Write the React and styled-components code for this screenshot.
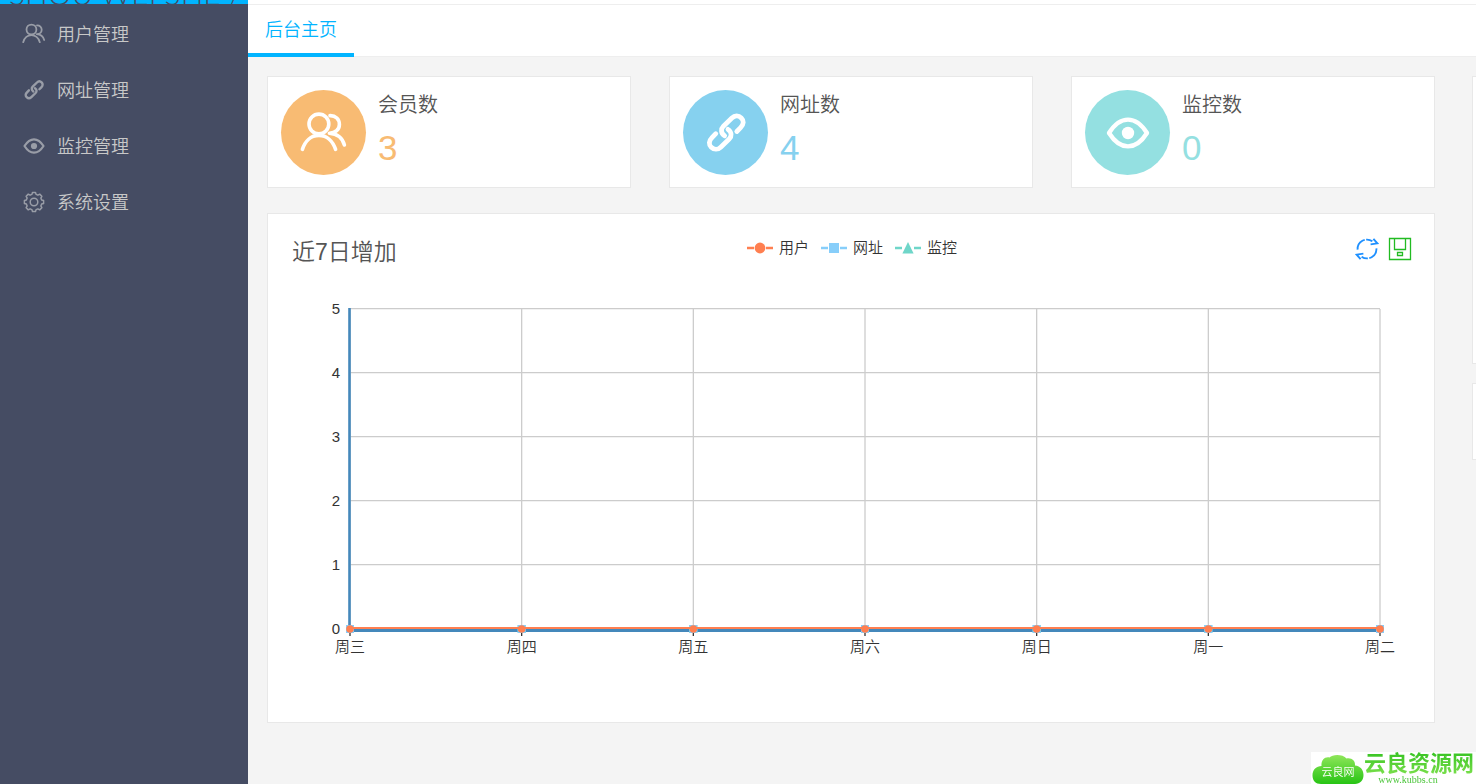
import React, { useState } from 'react';
import styled, { createGlobalStyle } from 'styled-components';

const MENU = [
  { key: 'user', title: '用户管理', icon: 'users' },
  { key: 'site', title: '网址管理', icon: 'link' },
  { key: 'monitor', title: '监控管理', icon: 'eye' },
  { key: 'setting', title: '系统设置', icon: 'gear' },
];

const STATS = [
  { title: '会员数', value: 3, icon: 'users', color: '#f8bb73' },
  { title: '网址数', value: 4, icon: 'link', color: '#86d1ef' },
  { title: '监控数', value: 0, icon: 'eye', color: '#94e0e1' },
];

const DAYS = ['周三', '周四', '周五', '周六', '周日', '周一', '周二'];

const SERIES = [
  { name: '用户', color: '#ff7f50', shape: 'circle', data: [0, 0, 0, 0, 0, 0, 0] },
  { name: '网址', color: '#87cefa', shape: 'rect', data: [0, 0, 0, 0, 0, 0, 0] },
  { name: '监控', color: '#6fd6c9', shape: 'triangle', data: [0, 0, 0, 0, 0, 0, 0] },
];

// outline of a cog with flat teeth
const gearPath = (teeth, inner, outer) => {
  const step = (Math.PI * 2) / teeth;
  const points = [];
  for (let i = 0; i < teeth; i++) {
    [
      [-0.34, inner],
      [-0.2, outer],
      [0.2, outer],
      [0.34, inner],
    ].forEach(([offset, r]) => {
      const a = (i + offset) * step - Math.PI / 2;
      points.push(`${(24 + r * Math.cos(a)).toFixed(2)} ${(24 + r * Math.sin(a)).toFixed(2)}`);
    });
  }
  return `M${points.join('L')}Z`;
};

const LINK_HALF = 'M34.8 22.5L38.6 18.6C42 15.2 42 11.5 39.3 8.9C36.6 6.3 32.6 6.4 29.9 9L21.4 17.2C18.7 19.9 18.7 24.2 22.6 26.8';

function Icon({ name, size }) {
  return (
    <svg
      width={size}
      height={size}
      viewBox="0 0 48 48"
      fill="none"
      stroke="currentColor"
      strokeLinecap="round"
      strokeLinejoin="round"
      aria-hidden="true"
    >
      {name === 'users' && (
        <g strokeWidth="3.6">
          <circle cx="18.9" cy="15" r="9.9" />
          <path d="M2.4 40.4C5 32 11 26.4 18.9 26.4S32.8 32 35.6 40.4" />
          <path d="M30 6.6C35.6 6.4 39.4 10.4 39.4 15.4S35.4 24.2 29.4 24.2C36.6 24.6 42.4 28.6 44.4 36" />
        </g>
      )}
      {name === 'link' && (
        <g strokeWidth="4.8">
          <path d={LINK_HALF} />
          <path d={LINK_HALF} transform="rotate(180 24.3 23.6)" />
        </g>
      )}
      {name === 'eye' && (
        <g strokeWidth="4.4">
          <path d="M5 24C11 14.5 17 10.6 24 10.6S37 14.5 43 24C37 33.5 31 37.4 24 37.4S11 33.5 5 24Z" />
          <circle cx="24" cy="24" r="6.2" fill="currentColor" stroke="none" />
        </g>
      )}
      {name === 'gear' && (
        <g strokeWidth="3">
          <path d={gearPath(8, 15.8, 19.4)} />
          <circle cx="24" cy="24" r="7.6" />
        </g>
      )}
    </svg>
  );
}

function LegendMark({ shape, color }) {
  return (
    <svg width="26" height="14" viewBox="0 0 26 14" aria-hidden="true">
      <path d="M0 7H7M19 7H26" stroke={color} strokeWidth="2.4" />
      {shape === 'circle' && <circle cx="13" cy="7" r="5.4" fill={color} />}
      {shape === 'rect' && <rect x="8" y="2" width="10" height="10" fill={color} />}
      {shape === 'triangle' && <path d="M13 1L18.6 12.6H7.4Z" fill={color} />}
    </svg>
  );
}

function LineChart() {
  const left = 82;
  const right = 1112;
  const top = 25;
  const bottom = 345;
  const max = 5;
  const x = (i) => left + ((right - left) * i) / (DAYS.length - 1);
  const y = (v) => bottom - ((bottom - top) * v) / max;
  const ticks = [5, 4, 3, 2, 1, 0];

  return (
    <StyledPlot viewBox="0 0 1166 438" role="img" aria-label="近7日增加">
      {ticks.slice(0, -1).map((v) => (
        <path key={v} d={`M${left} ${y(v) - 0.4}H${right}`} stroke="#ccc" strokeWidth="1.3" />
      ))}
      {DAYS.map((day, i) => (
        <path key={day} d={`M${x(i)} ${top}V${bottom}`} stroke="#ccc" strokeWidth="1.3" />
      ))}
      {DAYS.map((day, i) => (
        <path key={day} d={`M${x(i)} ${bottom}V352`} stroke="#333" strokeWidth="1.3" />
      ))}
      <path d={`M${left - 0.5} ${top - 1}V${bottom + 1}`} stroke="#4488bb" strokeWidth="2.6" />
      <path d={`M${left} ${bottom + 1.5}H${right}`} stroke="#4488bb" strokeWidth="3" />
      {SERIES.slice()
        .reverse()
        .map((s) => (
          <g key={s.name}>
            <polyline
              points={s.data.map((v, i) => `${x(i)},${y(v) - 1}`).join(' ')}
              fill="none"
              stroke={s.color}
              strokeWidth="2"
            />
            {s.data.map((v, i) =>
              s.shape === 'circle' ? (
                <circle key={i} cx={x(i)} cy={y(v)} r="3.8" fill={s.color} />
              ) : (
                <rect key={i} x={x(i) - 4} y={y(v) - 4} width="8" height="8" fill={s.color} />
              )
            )}
          </g>
        ))}
      {ticks.map((v) => (
        <text key={v} x="72" y={y(v) + 5} textAnchor="end">
          {v}
        </text>
      ))}
      {DAYS.map((day, i) => (
        <text key={day} x={x(i)} y="368" textAnchor="middle">
          {day}
        </text>
      ))}
    </StyledPlot>
  );
}

function App() {
  const [active, setActive] = useState('');

  return (
    <StyledLayout>
      <GlobalStyle />
      <StyledSide>
        <StyledBrand>
          <span>SHOU WEI SHE /</span>
        </StyledBrand>
        <StyledMenu>
          {MENU.map((item) => (
            <StyledMenuItem
              key={item.key}
              href={`#${item.key}`}
              $active={active === item.key}
              onClick={() => setActive(item.key)}
            >
              <Icon name={item.icon} size={24} />
              <span>{item.title}</span>
            </StyledMenuItem>
          ))}
        </StyledMenu>
      </StyledSide>

      <StyledMain>
        <StyledTabs>
          <StyledTab type="button">后台主页</StyledTab>
        </StyledTabs>

        <StyledContent>
          <StyledColumn>
            <StyledStats>
              {STATS.map((stat) => (
                <StyledStat key={stat.title}>
                  <StyledBadge $color={stat.color}>
                    <Icon name={stat.icon} size={48} />
                  </StyledBadge>
                  <div>
                    <StyledStatTitle>{stat.title}</StyledStatTitle>
                    <StyledStatValue $color={stat.color}>{stat.value}</StyledStatValue>
                  </div>
                </StyledStat>
              ))}
            </StyledStats>

            <StyledPanel>
              <StyledPanelHead>
                <h2>近7日增加</h2>
                <StyledLegend>
                  {SERIES.map((s) => (
                    <li key={s.name}>
                      <LegendMark shape={s.shape} color={s.color} />
                      {s.name}
                    </li>
                  ))}
                </StyledLegend>
                <StyledTools>
                  <StyledTool type="button" aria-label="还原" $color="#1e90ff">
                    <svg width="24" height="24" viewBox="0 0 24 24" fill="none" stroke="currentColor" strokeWidth="1.9">
                      <path d="M2.6 12.6A9.4 9.4 0 0 1 17.4 4.3" strokeDasharray="13 1.4 20" />
                      <path d="M21.4 11.4A9.4 9.4 0 0 1 6.6 19.7" strokeDasharray="13 1.4 20" />
                      <path d="M18.4 1.8L22.4 6.4L15.6 7.4" />
                      <path d="M5.6 22.2L1.6 17.6L8.4 16.6" />
                    </svg>
                  </StyledTool>
                  <StyledTool type="button" aria-label="保存为图片" $color="#22bb22">
                    <svg width="24" height="24" viewBox="0 0 24 24" fill="none" stroke="currentColor" strokeWidth="1.3">
                      <path d="M1.5 1.5H22.5V22.5H1.5Z" />
                      <path d="M6.5 1.5V12.5H17.5V1.5" />
                      <path d="M9.5 15.5H14.5V18.5H9.5Z" />
                    </svg>
                  </StyledTool>
                </StyledTools>
              </StyledPanelHead>
              <LineChart />
            </StyledPanel>
          </StyledColumn>

          <StyledAside>
            <StyledAsideCard $height={288} />
            <StyledAsideCard $height={77} />
          </StyledAside>
        </StyledContent>
      </StyledMain>

      <StyledWatermark>
        <StyledCloud>
          <svg width="52" height="30" viewBox="0 0 52 30" aria-hidden="true">
            <defs>
              <linearGradient id="cloud" x1="0" y1="0" x2="0" y2="1">
                <stop offset="0" stopColor="#8fe65a" />
                <stop offset="1" stopColor="#27c414" />
              </linearGradient>
            </defs>
            <path
              d="M9 30C3.600 30 .5 26.500 .5 21.500C.5 15.500 4.500 12 9.500 12C9 6 13 2.500 17.500 3.500C20.500 0 31 0 34.500 4.500C39.500 3.500 43.500 6.500 43 11.500C48.500 12 51.500 16 51.500 21C51.500 26.500 48 30 43 30Z"
              fill="url(#cloud)"
            />
          </svg>
          <span>云良网</span>
        </StyledCloud>
        <StyledSiteName>
          <b>云良资源网</b>
          <small>www.kubbs.cn</small>
        </StyledSiteName>
      </StyledWatermark>
    </StyledLayout>
  );
}

const GlobalStyle = createGlobalStyle`
  * {
    box-sizing: border-box;
  }
  body {
    margin: 0;
    background: #f4f4f4;
    color: #555;
    font-family: 'Liberation Sans', 'Noto Sans CJK SC', sans-serif;
    font-weight: 350;
  }
  svg {
    display: block;
    flex: none;
  }
`;

const StyledLayout = styled.div`
  display: flex;
  min-height: 100vh;
`;

const StyledSide = styled.aside`
  flex: none;
  width: 248px;
  background: #454c63;
`;

const StyledBrand = styled.div`
  display: flex;
  align-items: flex-end;
  height: 4px;
  padding-left: 9px;
  overflow: hidden;
  background: #01b4ff;
  color: #454c63;
  font-family: Lato, sans-serif;
  font-size: 30px;
  font-weight: 300;
  line-height: 22px;
  white-space: nowrap;
`;

const StyledMenu = styled.nav`
  display: flex;
  flex-direction: column;
  padding-top: 2px;
`;

const StyledMenuItem = styled.a`
  display: flex;
  align-items: center;
  gap: 11px;
  height: 56px;
  padding-left: 22px;
  color: ${(props) => (props.$active ? '#fff' : '#c8c8c8')};
  font-size: 18px;
  text-decoration: none;

  svg {
    color: #999da7;
  }

  span {
    padding-bottom: 2px;
  }
`;

const StyledMain = styled.main`
  flex: 1;
  min-width: 0;
  padding-top: 4px;
  overflow: hidden;
  background: linear-gradient(#fff 4px, #f4f4f4 4px);
`;

const StyledTabs = styled.div`
  display: flex;
  height: 53px;
  border-top: 1px solid #eee;
  border-bottom: 1px solid #eee;
  background: #fff;
`;

const StyledTab = styled.button`
  height: 52px;
  padding: 0 17px 2px;
  border: 0;
  border-bottom: 4px solid #01b4ff;
  background: none;
  color: #01b4ff;
  font-family: inherit;
  font-size: 18px;
  font-weight: inherit;
`;

const StyledContent = styled.div`
  display: flex;
  gap: 37px;
  padding: 19px 0 0 19px;
`;

const StyledColumn = styled.div`
  display: flex;
  flex: 1;
  flex-direction: column;
  gap: 25px;
  min-width: 0;
`;

const StyledStats = styled.div`
  display: grid;
  grid-template-columns: repeat(3, 1fr);
  gap: 38px;
`;

const StyledStat = styled.section`
  display: flex;
  gap: 12px;
  height: 112px;
  padding: 13px;
  border: 1px solid #e8e8e8;
  background: #fff;
`;

const StyledBadge = styled.div`
  display: flex;
  flex: none;
  align-items: center;
  justify-content: center;
  width: 85px;
  height: 85px;
  border-radius: 50%;
  background: ${(props) => props.$color};
  color: #fff;
`;

const StyledStatTitle = styled.div`
  font-size: 20px;
  line-height: 30px;
`;

const StyledStatValue = styled.div`
  margin-top: 8px;
  color: ${(props) => props.$color};
  font-size: 35px;
  line-height: 40px;
`;

const StyledPanel = styled.section`
  border: 1px solid #e8e8e8;
  background: #fff;
`;

const StyledPanelHead = styled.header`
  display: grid;
  grid-template-columns: 1fr auto 1fr;
  align-items: center;
  height: 70px;
  padding: 0 22px 0 24px;

  h2 {
    margin: 0;
    padding-top: 2px;
    font-size: 23px;
    font-weight: inherit;
  }
`;

const StyledLegend = styled.ul`
  display: flex;
  gap: 12px;
  margin: 0;
  padding: 0 0 2px;
  color: #333;
  font-size: 15px;
  line-height: 20px;
  list-style: none;

  li {
    display: flex;
    align-items: center;
    gap: 6px;
  }
`;

const StyledTools = styled.div`
  display: flex;
  justify-content: flex-end;
  gap: 9px;
`;

const StyledTool = styled.button`
  padding: 0;
  border: 0;
  background: none;
  color: ${(props) => props.$color};
`;

const StyledPlot = styled.svg`
  width: 100%;
  height: auto;
  font-size: 15px;
  fill: #333;
`;

const StyledAside = styled.aside`
  display: flex;
  flex: none;
  flex-direction: column;
  gap: 19px;
  width: 4px;
`;

const StyledAsideCard = styled.div`
  width: 364px;
  height: ${(props) => props.$height}px;
  border: 1px solid #e8e8e8;
  background: #fff;
`;

const StyledWatermark = styled.div`
  position: fixed;
  right: 0;
  bottom: 0;
  display: flex;
  align-items: flex-end;
  padding: 0 2px 0 1px;
  background: #fff;
`;

const StyledCloud = styled.div`
  display: grid;
  place-items: center;

  svg,
  span {
    grid-area: 1 / 1;
  }

  span {
    padding-top: 6px;
    color: #fff;
    font-size: 11px;
    line-height: 14px;
  }
`;

const StyledSiteName = styled.div`
  display: flex;
  flex-direction: column;
  align-items: center;

  b {
    background: linear-gradient(#36c322, #7be04c);
    background-clip: text;
    color: transparent;
    font-size: 22px;
    font-weight: 700;
    line-height: 23px;
  }

  small {
    padding-right: 22px;
    color: #4bc53a;
    font-family: 'Liberation Serif', serif;
    font-size: 10px;
    font-weight: 400;
    line-height: 9px;
  }
`;

export default App;
